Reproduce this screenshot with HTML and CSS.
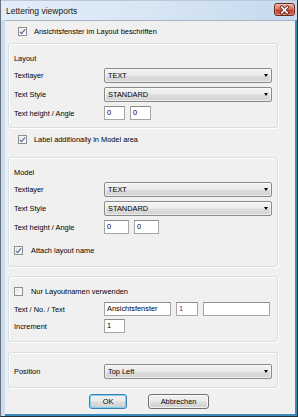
FILE: index.html
```html
<!DOCTYPE html>
<html>
<head>
<meta charset="utf-8">
<link rel="stylesheet" href="styles.css">
</head>
<body>
<div class="window">
  <div class="titlebar">
    <span class="title">Lettering viewports</span>
    <div class="close">
      <svg width="20" height="12" viewBox="0 0 20 12">
        <path d="M7 3 L13 9 M13 3 L7 9" stroke="#4a1a12" stroke-width="3.2" stroke-linecap="square"/>
        <path d="M7 3 L13 9 M13 3 L7 9" stroke="#ffffff" stroke-width="1.6" stroke-linecap="square"/>
      </svg>
    </div>
  </div>
  <div class="client">
    <div class="check top-check"><span class="cb checked"></span><span>Ansichtsfenster im Layout beschriften</span></div>

    <div class="group g1">
      <div class="ghead">Layout</div>
      <div class="row r-first"><span class="lbl">Textlayer</span><div class="select"><span>TEXT</span><i class="arrow"></i></div></div>
      <div class="row"><span class="lbl">Text Style</span><div class="select"><span>STANDARD</span><i class="arrow"></i></div></div>
      <div class="row row-in"><span class="lbl">Text height / Angle</span><div class="inputs"><div class="input w21">0</div><div class="input w21">0</div></div></div>
    </div>

    <div class="check mid-check"><span class="cb checked"></span><span>Label additionally in Model area</span></div>

    <div class="group g2">
      <div class="ghead">Model</div>
      <div class="row r-first"><span class="lbl">Textlayer</span><div class="select"><span>TEXT</span><i class="arrow"></i></div></div>
      <div class="row"><span class="lbl">Text Style</span><div class="select"><span>STANDARD</span><i class="arrow"></i></div></div>
      <div class="row row-in"><span class="lbl">Text height / Angle</span><div class="inputs"><div class="input w25">0</div><div class="input w25">0</div></div></div>
      <div class="check in-check"><span class="cb checked"></span><span>Attach layout name</span></div>
    </div>

    <div class="group g3">
      <div class="check in-check first"><span class="cb"></span><span>Nur Layoutnamen verwenden</span></div>
      <div class="row row-in r5"><span class="lbl">Text / No. / Text</span><div class="inputs"><div class="input w67">Ansichtsfenster</div><div class="input w22 purple">1</div><div class="input w67"></div></div></div>
      <div class="row row-in r3"><span class="lbl">Increment</span><div class="inputs"><div class="input w21">1</div></div></div>
    </div>

    <div class="group g4">
      <div class="row"><span class="lbl">Position</span><div class="select"><span>Top Left</span><i class="arrow"></i></div></div>
    </div>

    <div class="buttons">
      <div class="btn default">OK</div>
      <div class="btn">Abbrechen</div>
    </div>
  </div>
</div>
</body>
</html>
```

FILE: styles.css
```css
* { box-sizing: border-box; }
html, body {
  margin: 0;
  padding: 0;
  width: 298px;
  height: 417px;
  overflow: hidden;
  background: #f0f0f0;
}
body {
  font-family: "Liberation Sans", Arial, sans-serif;
  font-size: 7.4px;
  color: #000;
}
.window {
  width: 298px;
  height: 417px;
  display: flex;
  flex-direction: column;
  background: #cddcec;
  border-left: 1px solid #66727e;
  border-right: 1px solid #24323c;
  border-bottom: 1px solid #24323c;
}
.titlebar {
  height: 20px;
  flex: none;
  display: flex;
  justify-content: space-between;
  align-items: flex-start;
  padding: 0 2px 0 5px;
  background: linear-gradient(to right, #e2edf8 0%, #d8e6f4 50%, #c5d9ee 100%);
  border-top: 1px solid #b9c9da;
}
.title {
  font-size: 8.5px;
  color: #1a1a1a;
  margin-top: 5px;
}
.close {
  margin-top: 2px;
  width: 21px;
  height: 13px;
  border: 1px solid #6a2a20;
  border-radius: 3px;
  background: linear-gradient(to bottom, #eab2a4 0%, #d9735d 45%, #c4402a 55%, #d5634c 100%);
  display: flex;
  align-items: center;
  justify-content: center;
  box-shadow: inset 0 0 0 1px rgba(255,255,255,0.25);
}
.close svg { display: block; }
.client {
  flex: 1;
  margin-left: 4px;
  background: #f0f0f0;
  border-top: 1px solid #a8b6c4;
  border-right: 2px solid #3a8cbc;
  border-bottom: 2px solid #3a8cbc;
  padding-left: 3px;
  display: flex;
  flex-direction: column;
}
.check {
  height: 12px;
  display: flex;
  align-items: center;
  gap: 8px;
  white-space: nowrap;
}
.top-check { margin-top: 4px; padding-left: 10px; gap: 7px; }
.mid-check { margin-top: 5px; padding-left: 10px; gap: 7px; }
.in-check { margin-top: 10px; }
.in-check.first { margin-top: 0; }
.cb {
  width: 9px;
  height: 9px;
  flex: none;
  border: 1px solid #8e8f8f;
  background: linear-gradient(135deg, #dcdcdc 0%, #f4f4f4 60%, #ffffff 100%);
  box-shadow: inset 0 0 0 1px #f6f6f6;
  position: relative;
}
.cb.checked::after {
  content: "";
  position: absolute;
  left: 2px;
  top: 0px;
  width: 2px;
  height: 5px;
  border-right: 1.5px solid #4a5f97;
  border-bottom: 1.5px solid #4a5f97;
  transform: rotate(40deg);
}
.group {
  width: 270px;
  border: 1px solid #d5dfe5;
  border-radius: 3px;
  box-shadow: inset 1px 1px 0 #ffffff, 1px 1px 0 #ffffff;
  padding: 0 5px;
  display: flex;
  flex-direction: column;
}
.g1 { margin-top: 6px; padding-top: 9px; padding-bottom: 7px; }
.g2 { margin-top: 12px; padding-top: 9px; padding-bottom: 10px; }
.g3 { margin-top: 9px; padding-top: 8px; padding-bottom: 8px; }
.g4 { margin-top: 10px; padding-top: 11px; padding-bottom: 8px; }
.ghead {
  height: 12px;
  line-height: 12px;
}
.row {
  height: 15px;
  display: flex;
  align-items: center;
  margin-top: 4px;
}
.g4 .row { margin-top: 0; }
.row.r-first { margin-top: 3px; }
.row.row-in { height: 14px; }
.row.r5 { margin-top: 5px; }
.row.r3 { margin-top: 3px; }
.lbl {
  width: 90px;
  flex: none;
  white-space: nowrap;
}
.select {
  width: 168px;
  height: 15px;
  border: 1px solid #8a8a8a;
  border-radius: 2px;
  background: linear-gradient(to bottom, #f3f3f3 0%, #ececec 45%, #dedede 55%, #d2d2d2 100%);
  box-shadow: inset 0 0 0 1px rgba(255,255,255,0.6);
  display: flex;
  align-items: center;
  justify-content: space-between;
  padding: 0 3px 0 3px;
}
.arrow {
  width: 0;
  height: 0;
  border-left: 2.5px solid transparent;
  border-right: 2.5px solid transparent;
  border-top: 3px solid #000;
}
.inputs {
  display: flex;
  gap: 5px;
}
.input {
  height: 14px;
  border: 1px solid #a6a6a6;
  border-top-color: #8c8c8c;
  background: #fff;
  padding-left: 2px;
  line-height: 12px;
  overflow: hidden;
  white-space: nowrap;
}
.w21 { width: 21px; }
.w22 { width: 22px; }
.w25 { width: 25px; }
.w67 { width: 67px; }
.purple { color: #5a2a6c; }
.buttons {
  margin-top: 6px;
  display: flex;
  gap: 21px;
  padding-left: 81px;
}
.btn {
  height: 15px;
  border: 1px solid #707070;
  border-radius: 3px;
  background: linear-gradient(to bottom, #f2f2f2 0%, #ebebeb 45%, #dddddd 55%, #cfcfcf 100%);
  box-shadow: inset 0 0 0 1px rgba(255,255,255,0.7);
  display: flex;
  align-items: center;
  justify-content: center;
  width: 61px;
}
.btn.default {
  width: 38px;
  border-color: #3c7fb1;
  box-shadow: inset 0 0 0 1px #7fd0f5;
}
```
